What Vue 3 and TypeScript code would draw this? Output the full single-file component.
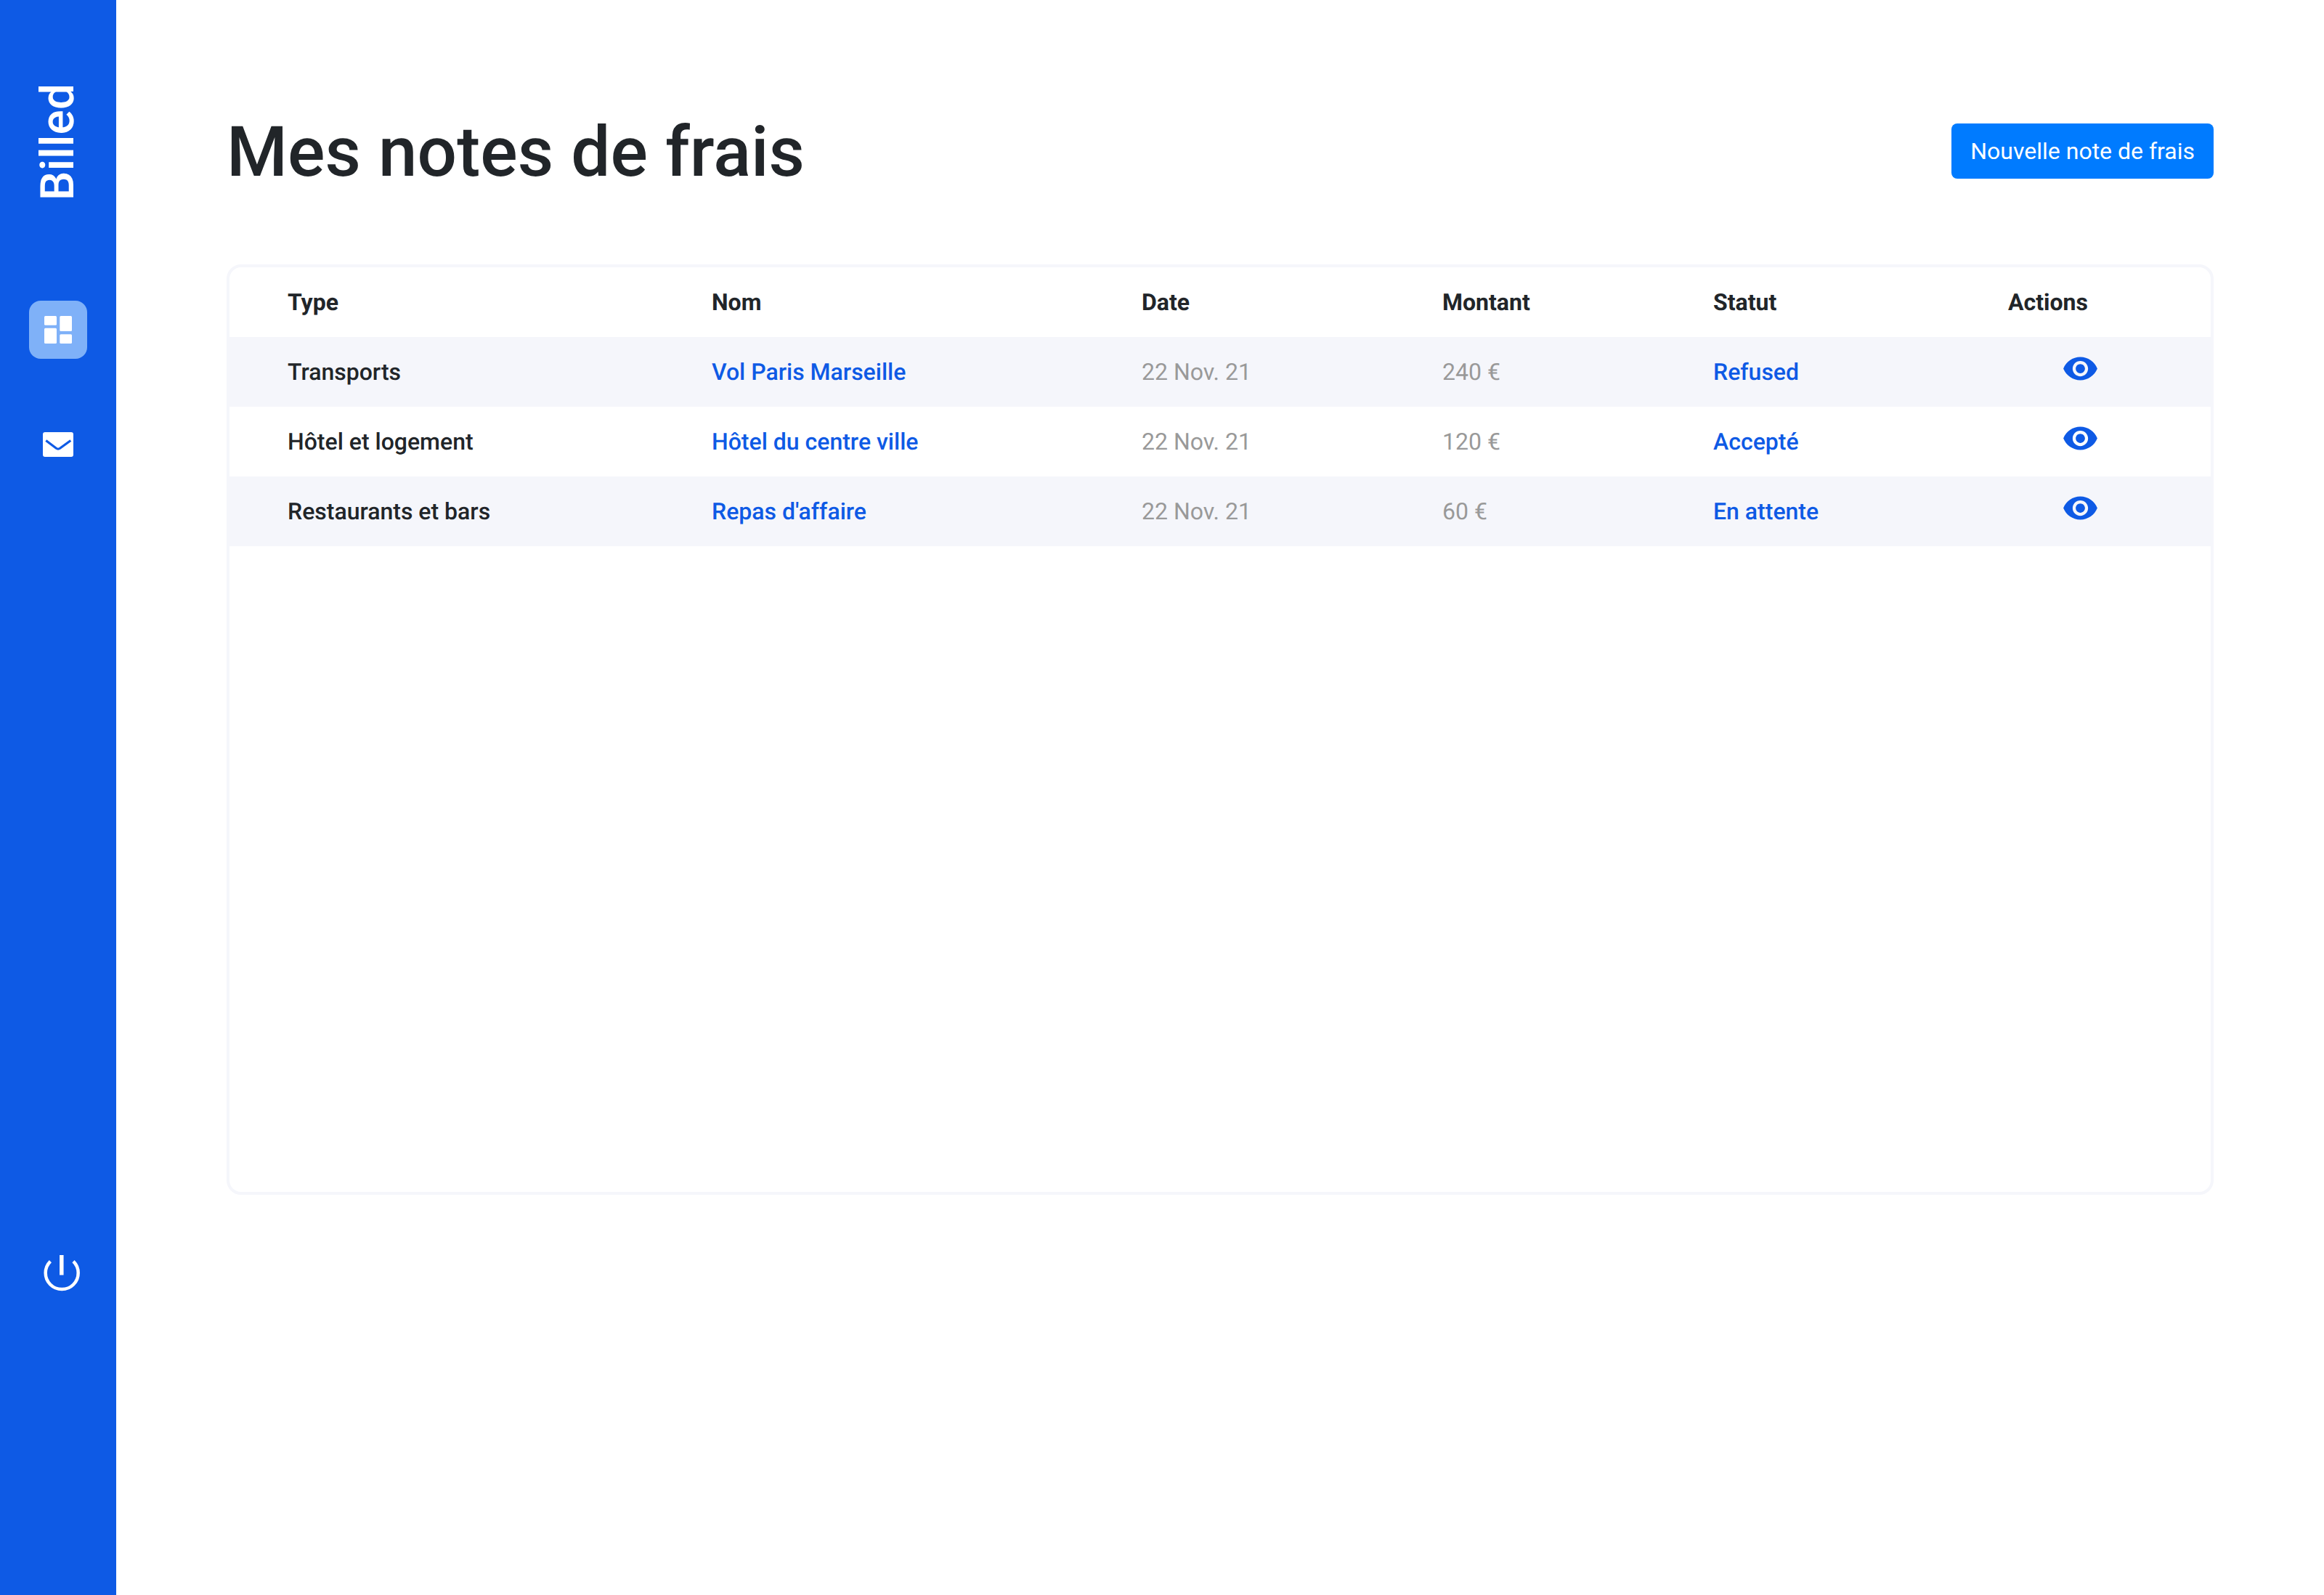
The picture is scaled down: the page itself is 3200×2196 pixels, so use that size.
<script setup lang="ts">
interface Bill {
  type: string
  name: string
  date: string
  amount: string
  status: string
}

const bills: Bill[] = [
  { type: 'Transports', name: 'Vol Paris Marseille', date: '22 Nov. 21', amount: '240 €', status: 'Refused' },
  { type: 'Hôtel et logement', name: 'Hôtel du centre ville', date: '22 Nov. 21', amount: '120 €', status: 'Accepté' },
  { type: 'Restaurants et bars', name: "Repas d'affaire", date: '22 Nov. 21', amount: '60 €', status: 'En attente' },
]
</script>

<template>
  <div class="layout">
    <aside class="sidebar">
      <div class="logo">Billed</div>
      <div class="nav-active">
        <svg width="38" height="38" viewBox="0 0 38 38" fill="#fff">
          <rect x="0" y="0" width="17" height="12.7" rx="1.5" />
          <rect x="0" y="16.7" width="17" height="21.3" rx="1.5" />
          <rect x="21.3" y="0" width="16.7" height="21" rx="1.5" />
          <rect x="21.3" y="25.3" width="16.7" height="12.7" rx="1.5" />
        </svg>
      </div>
      <svg class="mail" width="42" height="34" viewBox="0 0 42 34">
        <rect x="0" y="0" width="42" height="34" rx="3" fill="#fff" />
        <path d="M4.3 11.5 18.5 22.3Q21 24 23.5 22.3L38.3 11.5" fill="none" stroke="#0e5ae5" stroke-width="3.2" />
      </svg>
      <svg class="power" width="50" height="50" viewBox="0 0 50 50" fill="none" stroke="#fff">
        <path d="M9.4 8.6a22.5 22.5 0 1 0 31.6 0" stroke-width="4.5" />
        <line x1="24.8" y1="0" x2="24.8" y2="27.5" stroke-width="5.5" />
      </svg>
    </aside>

    <main class="content">
      <header class="head">
        <h1 class="title">Mes notes de frais</h1>
        <button class="new-bill" type="button">Nouvelle note de frais</button>
      </header>

      <section class="card">
        <div class="row head-row">
          <span>Type</span>
          <span>Nom</span>
          <span>Date</span>
          <span>Montant</span>
          <span>Statut</span>
          <span>Actions</span>
        </div>
        <div v-for="bill in bills" :key="bill.name" class="row body-row">
          <span>{{ bill.type }}</span>
          <span class="link">{{ bill.name }}</span>
          <span class="muted">{{ bill.date }}</span>
          <span class="muted">{{ bill.amount }}</span>
          <span class="link">{{ bill.status }}</span>
          <span class="action">
            <svg width="51" height="51" viewBox="0 0 24 24" fill="#0e5ae5">
              <path d="M12 4.5C7 4.5 2.73 7.61 1 12c1.73 4.39 6 7.5 11 7.5s9.27-3.11 11-7.5c-1.73-4.39-6-7.5-11-7.5zM12 17c-2.76 0-5-2.24-5-5s2.24-5 5-5 5 2.24 5 5-2.24 5-5 5zm0-8c-1.66 0-3 1.34-3 3s1.34 3 3 3 3-1.34 3-3-1.34-3-3-3z" />
            </svg>
          </span>
        </div>
      </section>
    </main>
  </div>
</template>

<style>
html,
body {
  margin: 0;
  background: #fff;
}
</style>

<style scoped>
.layout {
  display: flex;
  min-height: 2196px;
  font-family: Roboto, "Liberation Sans", sans-serif;
  color: #212529;
  text-rendering: geometricPrecision;
}

.sidebar {
  width: 160px;
  flex: none;
  background: #0e5ae5;
  display: flex;
  flex-direction: column;
  align-items: center;
  box-sizing: border-box;
  padding-top: 121px;
}

.logo {
  writing-mode: vertical-rl;
  transform: rotate(180deg);
  font-size: 64px;
  font-weight: 500;
  letter-spacing: 0.3px;
  line-height: 64px;
  color: #fff;
  height: 155px;
  white-space: nowrap;
}

.nav-active {
  margin-top: 138px;
  width: 80px;
  height: 80px;
  border-radius: 16px;
  background: #7fb1f8;
  display: flex;
  align-items: center;
  justify-content: center;
}

.mail {
  margin-top: 101px;
}

.power {
  margin-top: 1099px;
  margin-left: 9px;
}

.content {
  flex: 1;
  box-sizing: border-box;
  padding: 152px 152px 0 152px;
  min-width: 0;
}

.head {
  display: flex;
  align-items: center;
  justify-content: space-between;
  height: 112px;
}

.title {
  margin: 0;
  padding-top: 4px;
  font-size: 96px;
  font-weight: 500;
  line-height: 112px;
  letter-spacing: 0.1px;
}

.new-bill {
  height: 76px;
  padding: 0 26px;
  border: 0;
  border-radius: 8px;
  background: #007bff;
  color: #fff;
  font: 400 32px/48px Roboto, "Liberation Sans", sans-serif;
}

.card {
  margin-top: 100px;
  height: 1281px;
  box-sizing: border-box;
  border: 4px solid #f5f6fb;
  border-radius: 20px;
  overflow: hidden;
}

.row {
  display: grid;
  grid-template-columns: 584px 592px 414px 373px 406px 1fr;
  align-items: center;
  height: 96px;
  padding-left: 80px;
  font-size: 32px;
  line-height: 48px;
}

.head-row {
  font-weight: 700;
}

.body-row {
  font-weight: 500;
}

.body-row:nth-child(even) {
  background: #f5f6fb;
}

.link {
  color: #0e5ae5;
}

.muted {
  color: #999;
  font-weight: 400;
}

.action {
  display: flex;
  padding-left: 74px;
  margin-top: -10px;
}
</style>
